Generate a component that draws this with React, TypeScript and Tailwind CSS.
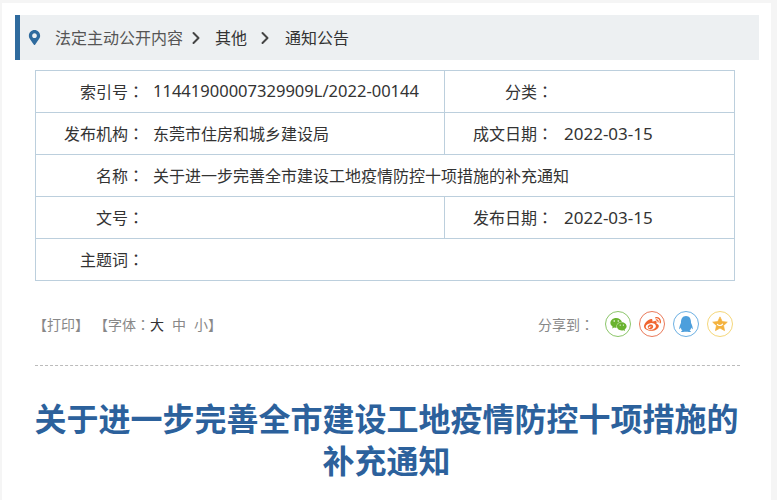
import React from "react";
import { FaMapMarkerAlt, FaWeixin, FaWeibo, FaQq } from "react-icons/fa";
import { ChevronRight } from "lucide-react";

const font = "font-['Noto_Sans','Noto_Sans_CJK_SC',sans-serif]";

function Colon() {
  // centred full-width colon, the SC glyph sits bottom-left
  return <span className="font-['Noto_Sans_CJK_TC',sans-serif]">：</span>;
}

function Label({ text, className = "" }: { text: string; className?: string }) {
  return (
    <div className={"shrink-0 text-right whitespace-nowrap " + className}>
      {text}
      <Colon />
    </div>
  );
}

export default function App() {
  return (
    <div className={"h-[500px] w-[777px] overflow-hidden bg-[#f5f5f5] pt-[3px] pl-[2px] pr-[6px] " + font}>
      <div className="h-[497px] bg-white pl-[13px] pr-[12px] pt-[12px]">
        {/* breadcrumb */}
        <div className="flex h-[45px] items-center border-l-[5px] border-[#2f6b9e] bg-[#edf0f2] pt-[1px] text-[16px] text-[#333]">
          <FaMapMarkerAlt className="mb-[1px] ml-[7px] text-[#2f6b9e]" size={15} />
          <span className="ml-[13px] text-[#555]">法定主动公开内容</span>
          <ChevronRight className="ml-[3px] text-[#444]" size={20} strokeWidth={2.4} />
          <span className="ml-[9px]">其他</span>
          <ChevronRight className="ml-[8px] text-[#444]" size={20} strokeWidth={2.4} />
          <span className="ml-[10px]">通知公告</span>
        </div>

        {/* info table */}
        <div className="mt-[10px] mr-[24px] ml-[20px] border border-[#bccfdd] text-[16px] text-[#333]">
          <div className="flex h-[42px] items-center border-b border-[#bccfdd]">
            <Label className="w-[108px]" text="索引号" />
            <div className="ml-[9px] w-[291px] text-[16.55px]">11441900007329909L/2022-00144</div>
            <div className="flex h-full flex-1 items-center border-l border-[#bccfdd]">
              <Label className="w-[108px]" text="分类" />
            </div>
          </div>
          <div className="flex h-[42px] items-center border-b border-[#bccfdd]">
            <Label className="w-[108px]" text="发布机构" />
            <div className="ml-[9px] w-[291px]">东莞市住房和城乡建设局</div>
            <div className="flex h-full flex-1 items-center border-l border-[#bccfdd]">
              <Label className="w-[108px]" text="成文日期" />
              <div className="ml-[11px] text-[17px]">2022-03-15</div>
            </div>
          </div>
          <div className="flex h-[42px] items-center border-b border-[#bccfdd]">
            <Label className="w-[108px]" text="名称" />
            <div className="ml-[9px]">关于进一步完善全市建设工地疫情防控十项措施的补充通知</div>
          </div>
          <div className="flex h-[42px] items-center border-b border-[#bccfdd]">
            <Label className="w-[108px]" text="文号" />
            <div className="ml-[9px] w-[291px]"></div>
            <div className="flex h-full flex-1 items-center border-l border-[#bccfdd]">
              <Label className="w-[108px]" text="发布日期" />
              <div className="ml-[11px] text-[17px]">2022-03-15</div>
            </div>
          </div>
          <div className="flex h-[41px] items-center">
            <Label className="w-[108px]" text="主题词" />
          </div>
        </div>

        {/* tools */}
        <div className="mt-[28px] mr-[26px] ml-[20px] flex h-[30px] items-center justify-between text-[14px] text-[#888]">
          <div className="-ml-[2px] flex items-center">
            <span>【打印】</span>
            <span className="ml-[5px]">
              【字体
              <Colon />
            </span>
            <span className="text-[#333]">大</span>
            <span className="ml-[8px]">中</span>
            <span className="ml-[8px]">小</span>
            <span>】</span>
          </div>
          <div className="flex items-center">
            <span className="mr-[11px]">
              分享到
              <Colon />
            </span>
            <div className="flex gap-[8px]">
              <span className="flex h-[26px] w-[26px] items-center justify-center rounded-full border border-[#8cc66a] text-[#6ab32f]">
                <FaWeixin size={17} />
              </span>
              <span className="flex h-[26px] w-[26px] items-center justify-center rounded-full border border-[#ea7a5a] text-[#f0652f]">
                <FaWeibo size={17} />
              </span>
              <span className="flex h-[26px] w-[26px] items-center justify-center rounded-full border border-[#6cb0e3] text-[#4d9fdc]">
                <FaQq size={16} />
              </span>
              <span className="flex h-[26px] w-[26px] items-center justify-center rounded-full border border-[#f5d77a]">
                <svg width="18" height="18" viewBox="0 0 24 24">
                  <path
                    d="M12 2.5l2.9 6.2 6.8.8-5 4.6 1.3 6.7-6-3.4-6 3.4 1.3-6.7-5-4.6 6.8-.8z"
                    fill="#f4b23e"
                    strokeLinejoin="round"
                    stroke="#f4b23e"
                  />
                  <path d="M8.5 12.5c1.5 2 5.5 2 7 -.3" fill="none" stroke="#fff" strokeWidth="1.4" strokeLinecap="round" />
                </svg>
              </span>
            </div>
          </div>
        </div>

        {/* divider */}
        <div className="mt-[26px] ml-[20px] w-[705px] border-t border-dashed border-[#bbb]"></div>

        {/* title */}
        <h1 className="mt-[32px] mr-[19px] ml-[18px] text-center text-[32px] leading-[42px] font-bold whitespace-pre-line text-[#2c619c]">
          {"关于进一步完善全市建设工地疫情防控十项措施的\n补充通知"}
        </h1>
      </div>
    </div>
  );
}
